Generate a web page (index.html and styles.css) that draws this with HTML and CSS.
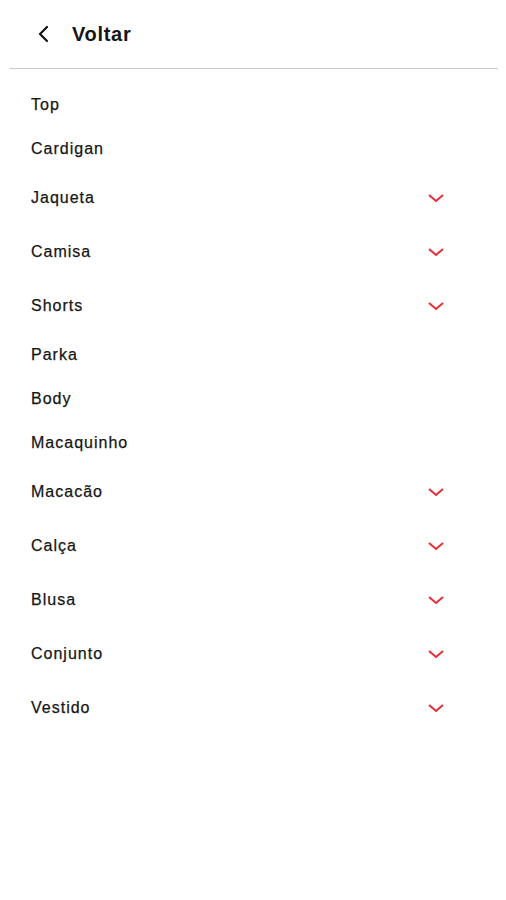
FILE: index.html
```html
<!DOCTYPE html>
<html lang="pt">
<head>
    <meta charset="UTF-8">
    <meta name="viewport" content="width=device-width, initial-scale=1.0">
    <title>Categorias</title>
    <link rel="stylesheet" href="styles.css">
</head>
<body>
    <div class="header">
        <svg class="back" width="14" height="18" viewBox="0 0 14 18">
            <path d="M10 2 L3 9 L10 16" fill="none" stroke="#111" stroke-width="2.2" stroke-linecap="round" stroke-linejoin="round"/>
        </svg>
        <span class="title">Voltar</span>
    </div>
    <div class="divider"></div>
    <ul class="menu">
        <li class="item">Top</li>
        <li class="item">Cardigan</li>
        <li class="item sub">Jaqueta <svg class="chev" viewBox="0 0 18 10"><path d="M2 2 L9 8 L16 2"/></svg></li>
        <li class="item sub">Camisa <svg class="chev" viewBox="0 0 18 10"><path d="M2 2 L9 8 L16 2"/></svg></li>
        <li class="item sub">Shorts <svg class="chev" viewBox="0 0 18 10"><path d="M2 2 L9 8 L16 2"/></svg></li>
        <li class="item">Parka</li>
        <li class="item">Body</li>
        <li class="item">Macaquinho</li>
        <li class="item sub">Macacão <svg class="chev" viewBox="0 0 18 10"><path d="M2 2 L9 8 L16 2"/></svg></li>
        <li class="item sub">Calça <svg class="chev" viewBox="0 0 18 10"><path d="M2 2 L9 8 L16 2"/></svg></li>
        <li class="item sub">Blusa <svg class="chev" viewBox="0 0 18 10"><path d="M2 2 L9 8 L16 2"/></svg></li>
        <li class="item sub">Conjunto <svg class="chev" viewBox="0 0 18 10"><path d="M2 2 L9 8 L16 2"/></svg></li>
        <li class="item sub">Vestido <svg class="chev" viewBox="0 0 18 10"><path d="M2 2 L9 8 L16 2"/></svg></li>
    </ul>
</body>
</html>
```

FILE: styles.css
```css
body {
    font-family: "Liberation Sans", Arial, sans-serif;
    margin: 0;
    padding: 0;
    background-color: #fff;
    color: #161616;
}
.header {
    height: 68px;
    display: flex;
    align-items: center;
    padding-left: 37px;
}
.back {
    margin-right: 21px;
}
.title {
    font-size: 20px;
    font-weight: bold;
    letter-spacing: 0.7px;
}
.divider {
    height: 1px;
    margin: 0 8px 0 10px;
    background-color: #c8c8c8;
}
.menu {
    list-style: none;
    margin: 0;
    padding: 14px 0 0 0;
}
.item {
    height: 44px;
    display: flex;
    align-items: center;
    justify-content: space-between;
    padding: 0 61px 0 31px;
    font-size: 16px;
    letter-spacing: 1px;
    -webkit-text-stroke: 0.25px #161616;
}
.item.sub {
    height: 54px;
}
.chev {
    width: 18px;
    height: 10px;
    fill: none;
    stroke: #ee2a36;
    stroke-width: 2;
}
```
